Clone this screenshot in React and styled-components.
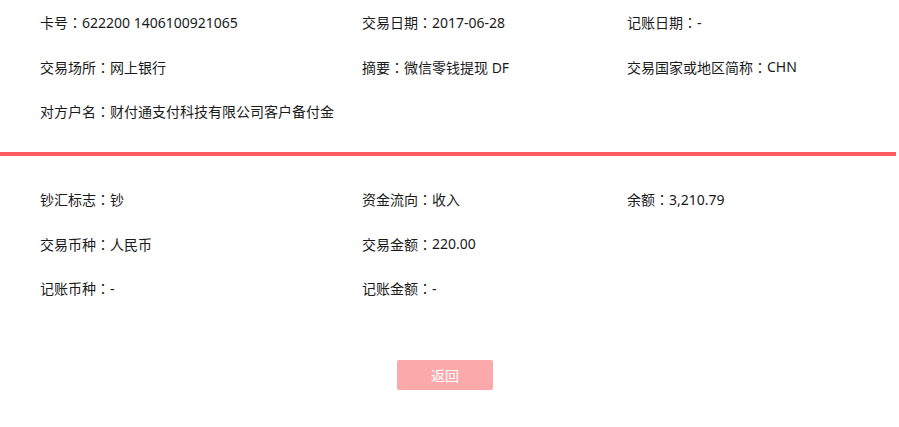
import React from "react";
import styled, { createGlobalStyle } from "styled-components";

const GlobalStyle = createGlobalStyle`
  html, body { margin: 0; padding: 0; background: #fff; }
  body {
    font-family: "Noto Sans", "Noto Sans CJK SC", sans-serif;
    font-size: 14px;
    color: #1a1a1a;
  }
`;

const Page = styled.div`
  width: 899px;
  display: flex;
  flex-direction: column;
`;

const Section = styled.section`
  display: grid;
  grid-template-columns: 322px 265px 1fr;
  grid-auto-rows: 44.5px;
  padding: ${(p) => p.$pad};
  padding-left: 40px;
`;

const Item = styled.div`
  display: flex;
  align-items: center;
  white-space: nowrap;
`;

const Colon = styled.span`
  font-family: "Noto Sans CJK JP", "Noto Sans CJK SC", sans-serif;
`;

const Divider = styled.div`
  width: 896px;
  height: 4px;
  background: #fd5b5f;
`;

const Footer = styled.div`
  display: flex;
  justify-content: center;
  padding-top: 49px;
  padding-right: 9px;
`;

const BackButton = styled.button`
  width: 96px;
  height: 30px;
  border: none;
  border-radius: 2px;
  background: #fca9ab;
  color: #fff;
  font-family: "Noto Sans CJK SC", sans-serif;
  font-size: 14px;
  cursor: pointer;
  padding: 0;
`;

const top = [
  ["卡号", "622200 1406100921065"],
  ["交易日期", "2017-06-28"],
  ["记账日期", "-"],
  ["交易场所", "网上银行"],
  ["摘要", "微信零钱提现 DF"],
  ["交易国家或地区简称", "CHN"],
  ["对方户名", "财付通支付科技有限公司客户备付金"],
];

const bottom = [
  ["钞汇标志", "钞"],
  ["资金流向", "收入"],
  ["余额", "3,210.79"],
  ["交易币种", "人民币"],
  ["交易金额", "220.00"],
  null,
  ["记账币种", "-"],
  ["记账金额", "-"],
];

const render = (list) =>
  list.map((it, i) => (
    <Item key={i}>
      {it && (
        <>
          {it[0]}
          <Colon>：</Colon>
          {it[1]}
        </>
      )}
    </Item>
  ));

export default function App() {
  return (
    <>
      <GlobalStyle />
      <Page>
        <Section $pad="0 0 18.5px">{render(top)}</Section>
        <Divider />
        <Section $pad="21px 0 0">{render(bottom)}</Section>
        <Footer>
          <BackButton>返回</BackButton>
        </Footer>
      </Page>
    </>
  );
}
